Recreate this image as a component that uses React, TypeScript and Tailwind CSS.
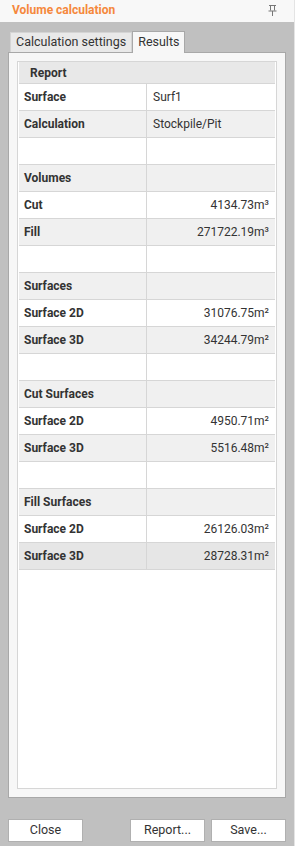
const rows: { label: string; value: string; num?: boolean }[] = [
  { label: "Surface", value: "Surf1" },
  { label: "Calculation", value: "Stockpile/Pit" },
  { label: "", value: "" },
  { label: "Volumes", value: "" },
  { label: "Cut", value: "4134.73m³", num: true },
  { label: "Fill", value: "271722.19m³", num: true },
  { label: "", value: "" },
  { label: "Surfaces", value: "" },
  { label: "Surface 2D", value: "31076.75m²", num: true },
  { label: "Surface 3D", value: "34244.79m²", num: true },
  { label: "", value: "" },
  { label: "Cut Surfaces", value: "" },
  { label: "Surface 2D", value: "4950.71m²", num: true },
  { label: "Surface 3D", value: "5516.48m²", num: true },
  { label: "", value: "" },
  { label: "Fill Surfaces", value: "" },
  { label: "Surface 2D", value: "26126.03m²", num: true },
  { label: "Surface 3D", value: "28728.31m²", num: true },
];

function PinIcon() {
  return (
    <svg width="9" height="11" viewBox="0 0 9 11" fill="none" stroke="#777" strokeWidth="1">
      <path d="M1 0.5h7M2.5 0.5v5M6.5 0.5v5M0.5 6h8M4.5 6v5" />
    </svg>
  );
}

export default function App() {
  return (
    <div
      className="flex h-[846px] w-[295px] flex-col border-r border-[#e4e4e4] bg-[#c0c0c0] text-[12px] text-[#333]"
      style={{ fontFamily: "Roboto, 'Liberation Sans', sans-serif" }}
    >
      <div className="flex h-[22px] items-center justify-between bg-[#f8f8f8] pb-[2px] pl-[12px] pr-[17px]">
        <span className="text-[12px] font-bold text-[#f5883c]">Volume calculation</span>
        <PinIcon />
      </div>

      <div className="flex flex-1 flex-col px-[8px] pt-[8px]">
        <div className="flex h-[22px] items-end pl-[2px]">
          <div className="flex h-[20px] items-center border border-b-0 border-[#d4d4d4] bg-[#e9e9e9] px-[5px] text-[12.5px]">
            Calculation settings
          </div>
          <div className="relative top-[1px] flex h-[22px] items-center border border-b-0 border-[#a8a8a8] bg-[#f7f7f7] px-[5px] text-[12.5px]">
            Results
          </div>
        </div>

        <div className="flex h-[746px] flex-col border border-[#a8a8a8] bg-[#f7f7f7] p-[8px]">
          <div className="flex flex-1 flex-col border border-[#d6d6d6] bg-white px-[1px]">
            <div className="flex h-[22px] items-center border-b border-[#d6d6d6] bg-[#e8e8e8] pl-[11px] font-bold">
              Report
            </div>
            {rows.map((r, i) => {
              const last = i === rows.length - 1;
              const bg = last ? "bg-[#e6e6e6]" : i % 2 === 1 ? "bg-[#f0f0f0]" : "bg-white";
              return (
                <div key={i} className={`grid h-[27px] grid-cols-[128px_1fr] border-b border-[#d6d6d6] ${bg}`}>
                  <div className="flex items-center border-r border-[#d6d6d6] pl-[5px] font-bold">{r.label}</div>
                  <div className={`flex items-center px-[6px] ${r.num ? "justify-end" : ""}`}>{r.value}</div>
                </div>
              );
            })}
          </div>
        </div>

        <div className="mt-[21px] flex justify-between">
          <button className="h-[23px] w-[75px] border border-[#b0b0b0] bg-white text-[12.5px]">Close</button>
          <div className="flex gap-[6px]">
            <button className="h-[23px] w-[75px] border border-[#b0b0b0] bg-white text-[12.5px]">Report...</button>
            <button className="h-[23px] w-[75px] border border-[#b0b0b0] bg-white text-[12.5px]">Save...</button>
          </div>
        </div>
      </div>
    </div>
  );
}
